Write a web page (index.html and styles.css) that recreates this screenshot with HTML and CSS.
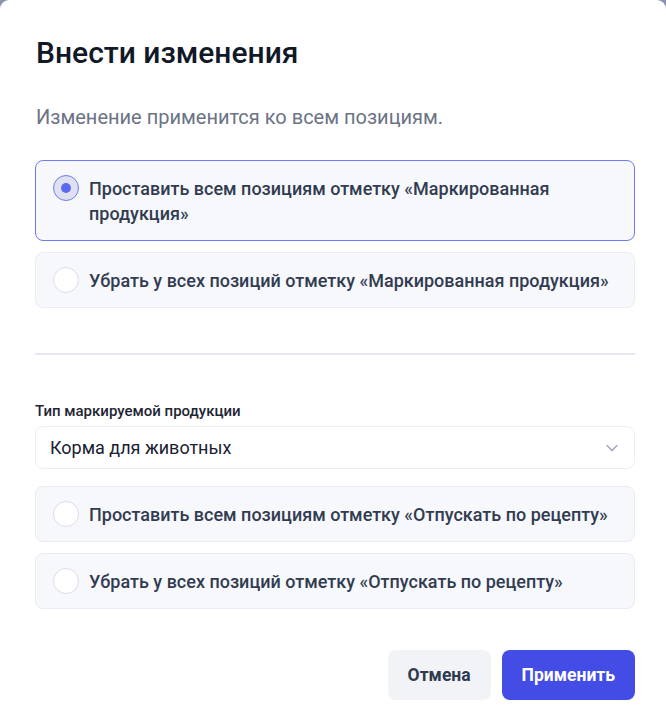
FILE: index.html
```html
<!DOCTYPE html>
<html lang="ru">
<head>
<meta charset="utf-8">
<title>Внести изменения</title>
<link rel="stylesheet" href="styles.css">
</head>
<body>
<div class="modal">
  <h1 class="modal-title">Внести изменения</h1>
  <p class="modal-text">Изменение применится ко всем позициям.</p>

  <div class="options">
    <label class="option option--checked">
      <span class="radio"><span class="radio-dot"></span></span>
      <span class="option-label">Проставить всем позициям отметку «Маркированная продукция»</span>
    </label>
    <label class="option">
      <span class="radio"></span>
      <span class="option-label">Убрать у всех позиций отметку «Маркированная продукция»</span>
    </label>
  </div>

  <hr class="divider">

  <div class="field">
    <div class="field-label">Тип маркируемой продукции</div>
    <div class="select">
      <span class="select-value">Корма для животных</span>
      <svg class="select-chevron" width="12" height="8" viewBox="0 0 12 8" fill="none">
        <path d="M1 1.5L6 6.5L11 1.5" stroke="#9aa1b3" stroke-width="1.3" stroke-linecap="round" stroke-linejoin="round"/>
      </svg>
    </div>
  </div>

  <div class="options options--second">
    <label class="option">
      <span class="radio"></span>
      <span class="option-label">Проставить всем позициям отметку «Отпускать по рецепту»</span>
    </label>
    <label class="option">
      <span class="radio"></span>
      <span class="option-label">Убрать у всех позиций отметку «Отпускать по рецепту»</span>
    </label>
  </div>

  <div class="actions">
    <button class="btn btn--secondary">Отмена</button>
    <button class="btn btn--primary">Применить</button>
  </div>
</div>
</body>
</html>
```

FILE: styles.css
```css
* {
  box-sizing: border-box;
}

html,
body {
  margin: 0;
  height: 100%;
}

body {
  background: #8a92ad;
  font-family: Roboto, "Noto Sans", Arial, sans-serif;
  color: #111827;
}

.modal {
  background: #ffffff;
  min-height: 100%;
  border-radius: 9px 9px 0 0;
  padding: 35px 31px 17px 35px;
}

.modal-title {
  margin: 0 0 0 1px;
  font-size: 30px;
  line-height: 36px;
  font-weight: 500;
  color: #111827;
}

.modal-text {
  margin: 33px 0 0 1px;
  font-size: 20px;
  line-height: 26px;
  font-weight: 400;
  color: #6b7385;
}

.options {
  margin-top: 30px;
  display: flex;
  flex-direction: column;
  gap: 11px;
}

.options--second {
  margin-top: 17px;
}

.option {
  display: flex;
  align-items: flex-start;
  gap: 10px;
  padding: 15px 16px 14px 17px;
  background: #f7f8fc;
  border: 1px solid #eaebf3;
  border-radius: 8px;
  cursor: pointer;
}

.option--checked {
  border-color: #6e7bf2;
}

.option-label {
  font-size: 18px;
  line-height: 25px;
  font-weight: 500;
  color: #323c50;
}

/* radio circle sits centred on the first text line */
.radio {
  flex: none;
  width: 26px;
  height: 26px;
  margin: -1px 0 -2px;
  border-radius: 50%;
  border: 1.5px solid #dcdcec;
  background: #ffffff;
  display: flex;
  align-items: center;
  justify-content: center;
}

.option--checked .radio {
  border-color: #6e7bf2;
  background: #dfe1ef;
}

.radio-dot {
  width: 10px;
  height: 10px;
  border-radius: 50%;
  background: #5b6af0;
}

.divider {
  margin: 45px 0 0;
  border: 0;
  border-top: 2px solid #e6e7f1;
}

.field {
  margin-top: 47px;
}

.field-label {
  font-size: 15px;
  line-height: 18px;
  font-weight: 500;
  color: #1f2633;
  margin-bottom: 6px;
}

.select {
  height: 43px;
  display: flex;
  align-items: center;
  justify-content: space-between;
  padding: 0 16px 0 14px;
  background: #ffffff;
  border: 1px solid #ebecf4;
  border-radius: 8px;
}

.select-value {
  font-size: 18px;
  font-weight: 400;
  color: #1a2030;
}

.select-chevron {
  display: block;
}

.actions {
  margin-top: 41px;
  display: flex;
  justify-content: flex-end;
  gap: 11px;
}

.btn {
  height: 50px;
  padding: 0 20px;
  border: 0;
  border-radius: 8px;
  font-family: inherit;
  font-size: 17.5px;
  font-weight: 700;
  cursor: pointer;
}

.btn--secondary {
  background: #f1f3f7;
  color: #2f3a4f;
}

.btn--primary {
  background: #434de6;
  color: #ffffff;
}
```
